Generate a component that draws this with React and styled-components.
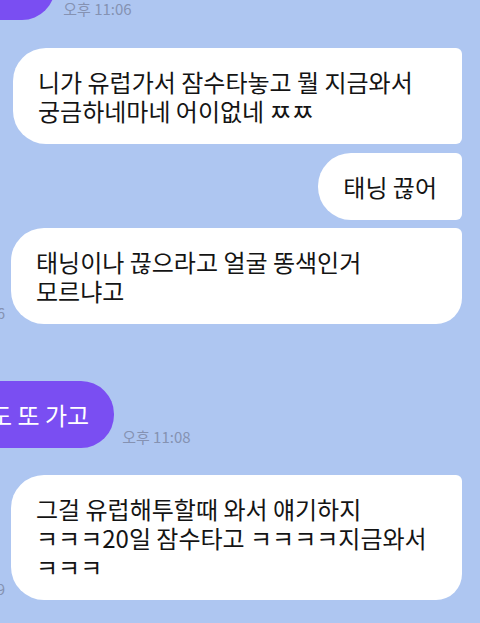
import React from "react";
import styled, { createGlobalStyle } from "styled-components";

const Global = createGlobalStyle`
  html, body {
    margin: 0;
    padding: 0;
    background: #aec6f1;
    overflow: hidden;
  }
  body {
    width: 480px;
    height: 623px;
    font-family: "Noto Sans CJK KR", "Noto Sans", sans-serif;
  }
`;

const Chat = styled.div`
  display: flex;
  flex-direction: column;
  width: 480px;
  height: 623px;
  padding-right: 18px;
  box-sizing: border-box;
  overflow: hidden;
`;

const Row = styled.div`
  display: flex;
  flex-direction: row;
  align-items: flex-end;
  justify-content: ${(p) => (p.$mine ? "flex-end" : "flex-start")};
  gap: ${(p) => (p.$mine ? 6 : 8)}px;
  margin-top: ${(p) => p.$top || 0}px;
  margin-left: ${(p) => p.$left || 0}px;
  flex-shrink: 0;
`;

const Bubble = styled.div`
  flex-shrink: 0;
  box-sizing: border-box;
  width: ${(p) => (p.$width ? `${p.$width}px` : "auto")};
  padding: 19px 25px ${(p) => (p.$cropped ? 23 : 19)}px;
  font-size: 24px;
  line-height: 29px;
  font-weight: 400;
  white-space: nowrap;
  color: ${(p) => (p.$mine ? "#141414" : "#ffffff")};
  background: ${(p) => (p.$mine ? "#ffffff" : "#7a4ef2")};
  border-radius: ${(p) =>
    p.$mine
      ? `33px 6px ${p.$last ? 26 : 6}px 33px`
      : "33px 33px 33px 33px"};
`;

const Line = styled.span`
  display: block;
`;

const Time = styled.span`
  flex-shrink: 0;
  font-size: 15px;
  line-height: 18px;
  color: #8592b2;
  margin-bottom: 2px;
  white-space: nowrap;
`;

export default function App() {
  return (
    <>
      <Global />
      <Chat>
        <Row $top={-51} $left={-39}>
          <Bubble $cropped>응응</Bubble>
          <Time>오후 11:06</Time>
        </Row>

        <Row $mine $top={28}>
          <Bubble $mine $width={449}>
            <Line>니가 유럽가서 잠수타놓고 뭘 지금와서</Line>
            <Line>궁금하네마네 어이없네 ㅉㅉ</Line>
          </Bubble>
        </Row>

        <Row $mine $top={9}>
          <Bubble $mine>태닝 끊어</Bubble>
        </Row>

        <Row $mine $top={8}>
          <Time>오후 11:06</Time>
          <Bubble $mine $last $width={451}>
            <Line>태닝이나 끊으라고 얼굴 똥색인거</Line>
            <Line>모르냐고</Line>
          </Bubble>
        </Row>

        <Row $top={57} $left={-57}>
          <Bubble>어도 또 가고</Bubble>
          <Time>오후 11:08</Time>
        </Row>

        <Row $mine $top={27}>
          <Time>오후 11:09</Time>
          <Bubble $mine $last $width={451}>
            <Line>그걸 유럽해투할때 와서 얘기하지</Line>
            <Line>ㅋㅋㅋ20일 잠수타고 ㅋㅋㅋㅋ지금와서</Line>
            <Line>ㅋㅋㅋ</Line>
          </Bubble>
        </Row>
      </Chat>
    </>
  );
}
